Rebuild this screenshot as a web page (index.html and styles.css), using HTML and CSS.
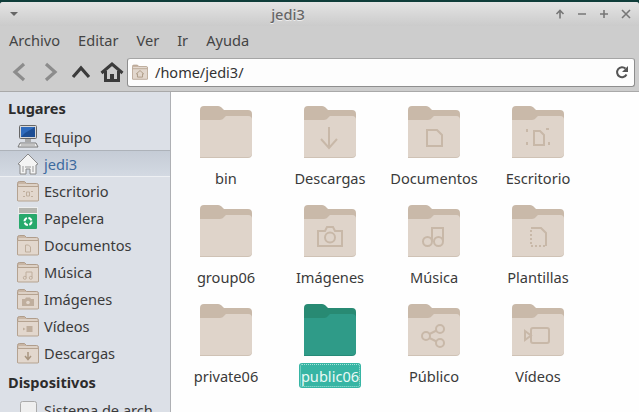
FILE: index.html
```html
<!DOCTYPE html>
<html>
<head>
    <title>jedi3</title>
    <meta name="viewport" content="width=device-width, initial-scale=1.0">
    <link rel="stylesheet" href="styles.css">
</head>
<body>
    <svg class="defs" width="0" height="0">
        <defs>
            <!-- big folder -->
            <symbol id="folder" viewBox="0 0 52 52">
                <path class="f-back" d="M0 4a4 4 0 0 1 4-4h14c2 0 3 1 4 2l2 2h24a4 4 0 0 1 4 4v40H0z"/>
                <path class="f-shade" d="M0 14h20c2 0 3-1 4-2l2-2h22a4 4 0 0 1 4 4v34a4 4 0 0 1-4 4H0z"/>
                <path class="f-front" d="M0 14h20c2 0 3-1 4-2l2-2h22a4 4 0 0 1 4 4v33a4 4 0 0 1-4 4H0z"/>
            </symbol>
            <!-- sidebar folder -->
            <symbol id="sfolder" viewBox="0 0 22 22">
                <path d="M.5 3.500a2 2 0 0 1 2-2h5l2 2h10a2 2 0 0 1 2 2v15h-21z" fill="#c8b6a5" stroke="#b09d8b"/>
                <path d="M.5 6.500h20.500a.5.500 0 0 1 .5.500v13a1 1 0 0 1-1 1h-19a1 1 0 0 1-1-1z" fill="#e2d7cd" stroke="#b5a391"/>
                <path d="M1.500 5h19" stroke="#f2ece6"/>
            </symbol>
        </defs>
    </svg>

    <div class="window">
        <header class="titlebar">
            <span class="wm-menu"></span>
            <span class="title">jedi3</span>
            <div class="wm-buttons">
                <svg width="10" height="10" viewBox="0 0 10 10"><path d="M5 9.500V2M1.500 5 5 1.500 8.500 5" /></svg>
                <svg width="10" height="10" viewBox="0 0 10 10"><path d="M1 5h8"/></svg>
                <svg width="10" height="10" viewBox="0 0 10 10"><path d="M1 5h8M5 1v8"/></svg>
                <svg width="10" height="10" viewBox="0 0 10 10"><path d="M1 1l8 8M9 1 1 9"/></svg>
            </div>
        </header>

        <nav class="menubar">
            <span>Archivo</span>
            <span>Editar</span>
            <span>Ver</span>
            <span>Ir</span>
            <span>Ayuda</span>
        </nav>

        <div class="toolbar">
            <span class="tool">
                <svg width="14" height="20" viewBox="0 0 14 20"><path class="off" d="M12 2 3 10l9 8"/></svg>
            </span>
            <span class="tool">
                <svg width="14" height="20" viewBox="0 0 14 20"><path class="off" d="m2 2 9 8-9 8"/></svg>
            </span>
            <span class="tool tool-up">
                <svg width="20" height="14" viewBox="0 0 20 14"><path class="on" d="m2 12 8-9 8 9"/></svg>
            </span>
            <span class="tool tool-home">
                <svg width="24" height="20" viewBox="0 0 24 20">
                    <path d="M1.500 11 12 2l10.500 9M5.500 9v9.500h13V9" fill="none" stroke="#3b3b3b" stroke-width="3"/>
                    <rect x="10" y="12" width="4" height="7" fill="#3b3b3b"/>
                </svg>
            </span>
            <div class="address">
                <svg class="address-icon" width="16" height="16" viewBox="0 0 22 22">
                    <use href="#sfolder"/>
                    <path d="M11 9 6 13.500h1.500V18h7v-4.500H16z" fill="none" stroke="#a8957f" stroke-width="1.200"/>
                </svg>
                <span class="address-text">/home/jedi3/</span>
                <svg class="reload" width="14" height="14" viewBox="0 0 14 14">
                    <path d="M11.500 9.500A5 5 0 1 1 10.500 3.500" fill="none" stroke="#555" stroke-width="2"/>
                    <path d="M13 1v6H7z" fill="#555"/>
                </svg>
            </div>
        </div>

        <div class="content">
            <aside class="sidebar">
                <h2>Lugares</h2>
                <div class="place first">
                    <svg width="22" height="24" viewBox="0 0 22 24">
                        <rect x="2.500" y=".5" width="17" height="13" rx="1" fill="#d8d8d8" stroke="#666"/>
                        <rect x="4" y="2" width="14" height="10" fill="#1d4e94"/>
                        <path d="M4 2h14L8 8 4 12z" fill="#2f6bbd"/>
                        <rect x="8" y="14" width="6" height="3" fill="#aaa"/>
                        <path d="M3 18h16l2 4H1z" fill="#eee" stroke="#777"/>
                        <path d="M4 20h14" stroke="#999"/>
                    </svg>
                    <span>Equipo</span>
                </div>
                <div class="place selected">
                    <svg width="22" height="22" viewBox="0 0 22 22">
                        <path d="M11 1 1 11l2 1v9h6v-5h4v5h6v-9l2-1z" fill="#f4f4f4" stroke="#8a8a8a"/>
                        <path d="M6 13v6M16 13v6M8 14h6" stroke="#999" fill="none"/>
                    </svg>
                    <span>jedi3</span>
                </div>
                <div class="place">
                    <svg width="22" height="22" viewBox="0 0 22 22">
                        <use href="#sfolder"/>
                        <path d="M6 11.500h2M14 11.500h2M6 16.500h2M14 16.500h2M9.500 12h3v4h-3z" fill="none" stroke="#bfae9d"/>
                    </svg>
                    <span>Escritorio</span>
                </div>
                <div class="place">
                    <svg width="22" height="22" viewBox="0 0 22 22">
                        <rect x="1.500" y=".5" width="19" height="6" fill="#b4b4ae" stroke="#eee"/>
                        <rect x="2" y="7" width="18" height="15" rx="1" fill="#27a96c"/>
                        <circle cx="11" cy="14.500" r="3.500" fill="none" stroke="#fff" stroke-width="2" stroke-dasharray="4 1.500"/>
                    </svg>
                    <span>Papelera</span>
                </div>
                <div class="place">
                    <svg width="22" height="22" viewBox="0 0 22 22">
                        <use href="#sfolder"/>
                        <path d="M8.500 11h3l2 2v5h-5z" fill="none" stroke="#bfae9d"/>
                    </svg>
                    <span>Documentos</span>
                </div>
                <div class="place">
                    <svg width="22" height="22" viewBox="0 0 22 22">
                        <use href="#sfolder"/>
                        <path d="M9 16.500V11h6v5.500" fill="none" stroke="#bfae9d"/>
                        <circle cx="7.800" cy="16.800" r="1.500" fill="none" stroke="#bfae9d"/>
                        <circle cx="13.800" cy="16.800" r="1.500" fill="none" stroke="#bfae9d"/>
                    </svg>
                    <span>Música</span>
                </div>
                <div class="place">
                    <svg width="22" height="22" viewBox="0 0 22 22">
                        <use href="#sfolder"/>
                        <path d="M5 11h3l1-1.500h4L14 11h3v7H5z" fill="#bfae9d"/>
                        <circle cx="11" cy="14.500" r="1.800" fill="#e2d7cd"/>
                    </svg>
                    <span>Imágenes</span>
                </div>
                <div class="place">
                    <svg width="22" height="22" viewBox="0 0 22 22">
                        <use href="#sfolder"/>
                        <rect x="9.500" y="11" width="6" height="6" fill="#bfae9d"/>
                        <path d="M6 12.500 8.500 14 6 15.500z" fill="#bfae9d"/>
                    </svg>
                    <span>Vídeos</span>
                </div>
                <div class="place">
                    <svg width="22" height="22" viewBox="0 0 22 22">
                        <use href="#sfolder"/>
                        <path d="M11 10v7M8 14l3 3.500 3-3.500" fill="none" stroke="#a8957f" stroke-width="1.500"/>
                    </svg>
                    <span>Descargas</span>
                </div>
                <h2 class="devices">Dispositivos</h2>
                <div class="place">
                    <svg width="22" height="22" viewBox="0 0 22 22">
                        <rect x="3.500" y="2.500" width="16" height="19" rx="2" fill="#efefef" stroke="#aaa"/>
                    </svg>
                    <span>Sistema de arch</span>
                </div>
            </aside>

            <main class="files">
                <div class="item">
                    <svg class="folder" viewBox="0 0 52 52"><use href="#folder"/></svg>
                    <span class="label">bin</span>
                </div>
                <div class="item">
                    <svg class="folder" viewBox="0 0 52 52"><use href="#folder"/>
                        <path class="glyph" d="M25 21v21M17 33l8 9 8-9"/>
                    </svg>
                    <span class="label">Descargas</span>
                </div>
                <div class="item">
                    <svg class="folder" viewBox="0 0 52 52"><use href="#folder"/>
                        <path class="glyph" d="M19 24h10l5 5v11H19z"/>
                    </svg>
                    <span class="label">Documentos</span>
                </div>
                <div class="item">
                    <svg class="folder" viewBox="0 0 52 52"><use href="#folder"/>
                        <path class="glyph" d="M22 25h6l4 4v10H22z"/>
                        <path class="glyph thin" d="M15 26v-3h3M34 23h3v3M15 36v3h3M37 36v3h-3"/>
                    </svg>
                    <span class="label">Escritorio</span>
                </div>
                <div class="item">
                    <svg class="folder" viewBox="0 0 52 52"><use href="#folder"/></svg>
                    <span class="label">group06</span>
                </div>
                <div class="item">
                    <svg class="folder" viewBox="0 0 52 52"><use href="#folder"/>
                        <path class="glyph" d="M14 26h7l2-4h6l2 4h7v15H14z"/>
                        <circle class="glyph" cx="26" cy="32.500" r="5"/>
                    </svg>
                    <span class="label">Imágenes</span>
                </div>
                <div class="item">
                    <svg class="folder" viewBox="0 0 52 52"><use href="#folder"/>
                        <path class="glyph" d="M24 36V23h11v13"/>
                        <circle class="glyph" cx="19.500" cy="36.500" r="4.500"/>
                        <circle class="glyph" cx="30.500" cy="36.500" r="4.500"/>
                    </svg>
                    <span class="label">Música</span>
                </div>
                <div class="item">
                    <svg class="folder" viewBox="0 0 52 52"><use href="#folder"/>
                        <path class="glyph" d="M19 23h10l5 5v13"/>
                        <path class="glyph dotted" d="M19 25v16h15"/>
                    </svg>
                    <span class="label">Plantillas</span>
                </div>
                <div class="item">
                    <svg class="folder" viewBox="0 0 52 52"><use href="#folder"/></svg>
                    <span class="label">private06</span>
                </div>
                <div class="item">
                    <svg class="folder active" viewBox="0 0 52 52"><use href="#folder"/></svg>
                    <span class="label picked">public06</span>
                </div>
                <div class="item">
                    <svg class="folder" viewBox="0 0 52 52"><use href="#folder"/>
                        <circle class="glyph" cx="18" cy="32" r="4"/>
                        <circle class="glyph" cx="32" cy="25" r="4"/>
                        <circle class="glyph" cx="32" cy="39" r="4"/>
                        <path class="glyph" d="m21.500 30 7-3.500M21.500 34l7 3.500"/>
                    </svg>
                    <span class="label">Público</span>
                </div>
                <div class="item">
                    <svg class="folder" viewBox="0 0 52 52"><use href="#folder"/>
                        <rect class="glyph" x="19" y="24" width="18" height="15" rx="2"/>
                        <path class="glyph" d="M13 27l6 4.500-6 4.500z"/>
                    </svg>
                    <span class="label">Vídeos</span>
                </div>
            </main>
        </div>
    </div>
</body>
</html>
```

FILE: styles.css
```css
html, body {
    margin: 0;
    padding: 0;
}

body {
    font-family: "Noto Sans", sans-serif;
    font-size: 14.6px;
    color: #333;
    background-color: #0f3d3a;
    overflow: hidden;
}

.defs {
    position: absolute;
}

.window {
    width: 639px;
    height: 410px;
    margin-top: 2px;
    display: flex;
    flex-direction: column;
    overflow: hidden;
    background-color: #cdcdcd;
    border-radius: 3px 3px 0 0;
}

.titlebar {
    height: 24px;
    flex: none;
    display: flex;
    align-items: center;
    background: linear-gradient(#e4e4e4, #cbcbcb);
    color: #666;
}

.wm-menu {
    width: 0;
    height: 0;
    margin-left: 10px;
    margin-right: 7px;
    border-left: 4px solid transparent;
    border-right: 4px solid transparent;
    border-top: 4px solid #666;
}

.title {
    flex: 1;
    text-align: center;
    font-weight: 500;
    text-shadow: 0 1px 0 #eee;
}

.wm-buttons {
    display: flex;
    gap: 12px;
    padding-right: 8px;
    padding-left: 4px;
}

.wm-buttons svg path {
    fill: none;
    stroke: #777;
    stroke-width: 1.6;
}

.menubar {
    height: 28px;
    flex: none;
    display: flex;
    align-items: center;
    gap: 18px;
    padding-left: 9px;
    color: #444;
}

.toolbar {
    height: 38px;
    flex: none;
    display: flex;
    align-items: center;
    padding: 0 4px 1px 3px;
    box-sizing: border-box;
    border-bottom: 1px solid #a9a9a9;
}

.tool {
    width: 32px;
    display: flex;
    justify-content: center;
}

.tool-up {
    width: 28px;
}

.tool-home {
    width: 28px;
    margin-left: 3px;
}

.tool svg path.off,
.tool svg path.on {
    fill: none;
    stroke-width: 3.2;
}

.tool svg path.off {
    stroke: #8c8c8c;
}

.tool svg path.on {
    stroke: #3b3b3b;
}

.address {
    flex: 1;
    height: 29px;
    margin-left: 1px;
    display: flex;
    align-items: center;
    box-sizing: border-box;
    padding: 0 5px 0 4px;
    background-color: #fdfdfd;
    border: 1px solid #8e8e8e;
    border-top-color: #a5a5a5;
    border-radius: 3px;
    font-size: 14.5px;
    color: #333;
}

.address-icon {
    flex: none;
}

.address-text {
    flex: 1;
    margin-left: 7px;
}

.content {
    flex: 1;
    display: flex;
    min-height: 0;
    background-color: #fefefe;
}

.sidebar {
    width: 171px;
    flex: none;
    box-sizing: border-box;
    padding-top: 6px;
    background-color: #dce0e7;
    border-right: 1px solid #aeb0b4;
    overflow: hidden;
    color: #3a3a3a;
}

.sidebar h2 {
    margin: 0;
    height: 20px;
    line-height: 20px;
    padding-left: 8px;
    font-size: 14.6px;
    font-weight: 700;
    color: #2c2c2c;
}

.sidebar h2.devices {
    height: 28px;
    line-height: 28px;
    margin-top: 2px;
}

.place {
    height: 27px;
    display: flex;
    align-items: center;
    gap: 5px;
    padding-left: 17px;
    white-space: nowrap;
}

.place svg {
    flex: none;
}

.place.first {
    height: 26px;
    margin-top: 6px;
}

.place.selected {
    box-sizing: border-box;
    color: #3d6a9e;
    background: linear-gradient(#c5ccd6, #d3d9e2);
    border-top: 1px solid #adb2b9;
    border-bottom: 1px solid #eef0f3;
}

.files {
    flex: 1;
    display: grid;
    grid-template-columns: repeat(4, 104px);
    grid-auto-rows: 84px;
    row-gap: 15px;
    align-content: start;
    padding: 14px 0 0 3px;
}

.item {
    display: flex;
    flex-direction: column;
    align-items: center;
}

.folder {
    width: 52px;
    height: 52px;
    flex: none;
    margin-bottom: 7px;
    --back: #c9b9a9;
    --shade: #cfc2b5;
    --front: #dfd4ca;
}

.folder.active {
    --back: #288a73;
    --shade: #268a78;
    --front: #2f9b88;
}

.f-back {
    fill: var(--back);
}

.f-shade {
    fill: var(--shade);
}

.f-front {
    fill: var(--front);
}

.glyph {
    fill: none;
    stroke: #c8b8a8;
    stroke-width: 2;
}

.glyph.thin {
    stroke-dasharray: 3 40;
}

.glyph.dotted {
    stroke-dasharray: 2 2;
}

.label {
    height: 25px;
    line-height: 27px;
    padding: 0 2px;
    border-radius: 3px;
    color: #3a3a3a;
}

.label.picked {
    color: #eafaf7;
    background-color: #37b5a4;
    outline: 1px dotted #a8e3da;
    outline-offset: -2px;
}
```
